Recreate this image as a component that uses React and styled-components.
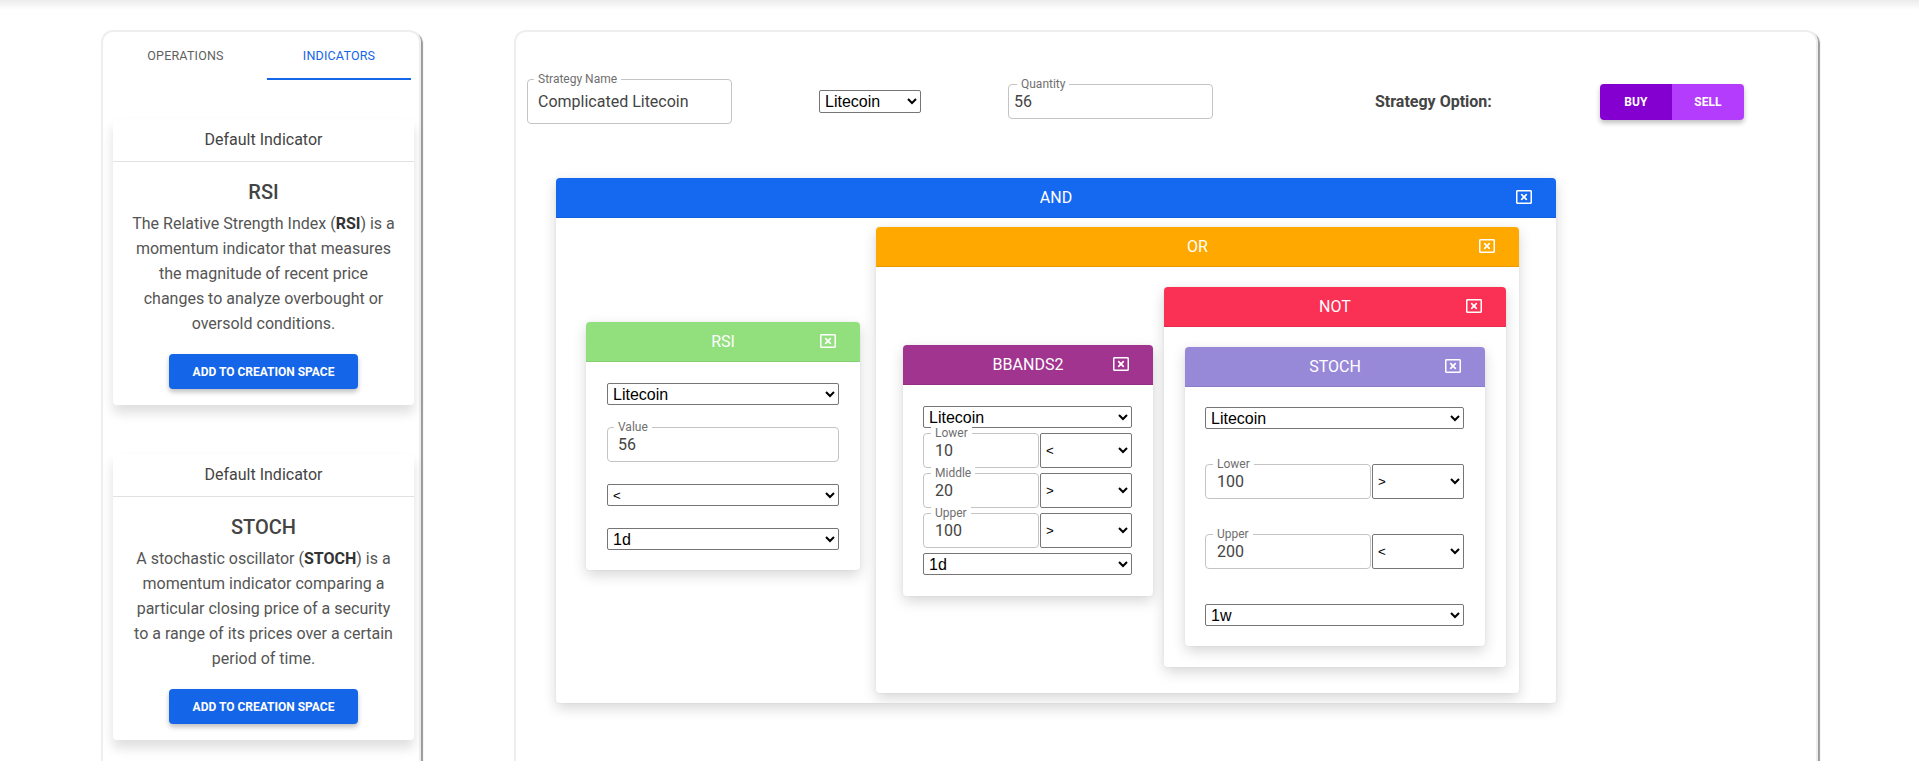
import React from 'react'
import styled, { createGlobalStyle } from 'styled-components'
import { FaRegWindowClose } from 'react-icons/fa'

const GlobalStyle = createGlobalStyle`
  body {
    margin: 0;
    background: #fff;
    font-family: Roboto, "Liberation Sans", Arial, sans-serif;
    overflow: hidden;
  }
`

const TopShade = styled.div`
  height: 10px;
  background: linear-gradient(#ececec, #fff);
`

const Page = styled.div`
  display: flex;
  align-items: flex-start;
  gap: 93px;
  padding: 20px 0 0 101px;
`

const Panel = styled.div`
  box-sizing: border-box;
  width: ${props => props.$w}px;
  height: 780px;
  border: 2px solid #eeeeee;
  border-radius: 12px;
  box-shadow: 2px 2px 1px #9a9a9a;
  background: #fff;
  flex-shrink: 0;
`

/* left side */
const Tabs = styled.div`
  display: flex;
  height: 48px;
  padding-left: 1px;
`

const Tab = styled.div`
  width: ${props => props.$w}px;
  display: flex;
  align-items: center;
  justify-content: center;
  font-size: 12.5px;
  font-weight: 400;
  letter-spacing: 0.2px;
  color: ${props => (props.$active ? '#1565e8' : '#5f5f5f')};
  border-bottom: 2px solid ${props => (props.$active ? '#1565e8' : 'transparent')};
  box-sizing: border-box;
`

const CardList = styled.div`
  display: flex;
  flex-direction: column;
  gap: 49px;
  padding: 39px 5px 0 10px;
`

const Card = styled.div`
  background: #fff;
  border-radius: 4px;
  box-shadow: 0 8px 12px rgba(0, 0, 0, 0.13);
`

const CardHead = styled.div`
  padding: 10px 0;
  line-height: 22px;
  font-size: 16px;
  color: #444;
  text-align: center;
  border-bottom: 1px solid #e2e2e2;
`

const CardBody = styled.div`
  display: flex;
  flex-direction: column;
  align-items: center;
  padding: 16px 16px 16px;
`

const CardTitle = styled.div`
  font-size: 20px;
  line-height: 28px;
  font-weight: 500;
  color: #444;
`

const CardText = styled.p`
  margin: 5px 0 0;
  font-size: 16px;
  line-height: 25px;
  color: #555;
  text-align: center;

  b {
    color: #333;
  }
`

const AddBtn = styled.button`
  margin-top: 18px;
  width: 189px;
  height: 35px;
  border: 0;
  border-radius: 4px;
  background: #1565e8;
  color: #fff;
  font-family: Roboto, sans-serif;
  font-size: 12px;
  font-weight: 700;
  box-shadow: 0 3px 5px rgba(0, 0, 0, 0.25);
`

/* right side */
const Main = styled.div`
  padding: 47px 0 0 11px;
`

const TopRow = styled.div`
  display: flex;
  align-items: center;
`

const Spaced = styled.div`
  margin-left: ${props => props.$ml || 0}px;
  display: flex;
  align-items: center;
`

const Outline = styled.div`
  position: relative;
  box-sizing: border-box;
  width: ${props => (props.$w ? props.$w + 'px' : 'auto')};
  height: ${props => props.$h || 35}px;
  border: 1px solid #c4c4c4;
  border-radius: 4px;
  display: flex;
  align-items: center;
  padding-left: ${props => props.$pl || 10}px;
  background: #fff;
`

const Legend = styled.span`
  position: absolute;
  top: -8px;
  left: ${props => props.$l || 6}px;
  padding: 0 4px;
  background: #fff;
  font-size: 12px;
  line-height: 14px;
  color: #6f6f6f;
`

const Value = styled.input`
  border: 0;
  outline: 0;
  padding: 0;
  width: 100%;
  background: transparent;
  font-family: Roboto, sans-serif;
  font-size: 16px;
  color: #444;
`

const Select = styled.select`
  box-sizing: border-box;
  width: ${props => (props.$w ? props.$w + 'px' : '100%')};
  height: ${props => props.$h || 22}px;
  font-family: "Liberation Sans", Arial, sans-serif;
  font-size: ${props => props.$fs || 16}px;
  color: #000;
  background: #fff;
  border: 1px solid #767676;
  border-radius: 2px;
  padding: 0 0 0 1px;
`

const OptionLabel = styled.div`
  font-size: 16px;
  font-weight: 700;
  color: #444;
`

const BtnGroup = styled.div`
  display: flex;
  border-radius: 4px;
  overflow: hidden;
  box-shadow: 0 3px 5px rgba(0, 0, 0, 0.25);
`

const ToggleBtn = styled.button`
  width: 72px;
  height: 36px;
  border: 0;
  background: ${props => props.$bg};
  color: #fff;
  font-family: Roboto, sans-serif;
  font-size: 12px;
  font-weight: 700;
`

const Canvas = styled.div`
  margin: 54px 0 0 29px;
`

const Block = styled.div`
  width: ${props => props.$w}px;
  margin-top: ${props => props.$mt || 0}px;
  flex-shrink: 0;
  background: #fff;
  border-radius: 4px;
  overflow: hidden;
  box-shadow: 0 5px 14px rgba(0, 0, 0, 0.16), 0 0 3px rgba(0, 0, 0, 0.05);
`

const BlockHead = styled.div`
  position: relative;
  box-sizing: border-box;
  height: 40px;
  display: flex;
  align-items: center;
  justify-content: center;
  background: ${props => props.$c};
  border-bottom: 1px solid rgba(0, 0, 0, 0.08);
  color: #fff;
  font-size: 16px;
`

const CloseIcon = styled(FaRegWindowClose)`
  position: absolute;
  right: 24px;
  top: 11px;
  width: 16px;
  height: 16px;
`

const OpBody = styled.div`
  display: flex;
  align-items: flex-start;
  gap: ${props => props.$gap}px;
  padding: ${props => props.$pad};
`

const IndBody = styled.div`
  display: flex;
  flex-direction: column;
  gap: ${props => props.$gap}px;
  padding: ${props => props.$pad};
`

const FieldRow = styled.div`
  display: grid;
  grid-template-columns: 1fr 92px;
  gap: 1px;
`

const Head = ({ color, children }) => (
  <BlockHead $c={color}>
    {children}
    <CloseIcon />
  </BlockHead>
)

const Field = ({ label, value, w, h, pl, l }) => (
  <Outline $w={w} $h={h} $pl={pl}>
    <Legend $l={l}>{label}</Legend>
    <Value readOnly value={value} />
  </Outline>
)

const Sel = ({ value, ...rest }) => (
  <Select value={value} onChange={() => {}} {...rest}>
    <option value={value}>{value}</option>
  </Select>
)

const BandRow = ({ label, value, op }) => (
  <FieldRow>
    <Field label={label} value={value} pl={11} l={7} />
    <Sel value={op} $h={35} $fs={13.33} />
  </FieldRow>
)

const App = () => {
  return (
    <>
      <GlobalStyle />
      <TopShade />
      <Page>
        <Panel $w={320}>
          <Tabs>
            <Tab $w={163}>OPERATIONS</Tab>
            <Tab $w={144} $active>INDICATORS</Tab>
          </Tabs>
          <CardList>
            <Card>
              <CardHead>Default Indicator</CardHead>
              <CardBody>
                <CardTitle>RSI</CardTitle>
                <CardText>
                  The Relative Strength Index (<b>RSI</b>) is a momentum indicator that measures the
                  magnitude of recent price changes to analyze overbought or oversold conditions.
                </CardText>
                <AddBtn>ADD TO CREATION SPACE</AddBtn>
              </CardBody>
            </Card>
            <Card>
              <CardHead>Default Indicator</CardHead>
              <CardBody>
                <CardTitle>STOCH</CardTitle>
                <CardText>
                  A stochastic oscillator (<b>STOCH</b>) is a momentum indicator comparing a
                  particular closing price of a security to a range of its prices over a certain
                  period of time.
                </CardText>
                <AddBtn>ADD TO CREATION SPACE</AddBtn>
              </CardBody>
            </Card>
          </CardList>
        </Panel>

        <Panel $w={1304}>
          <Main>
            <TopRow>
              <Field label="Strategy Name" value="Complicated Litecoin" w={205} h={45} pl={10} l={6} />
              <Spaced $ml={87}>
                <Sel value="Litecoin" $w={102} $h={23} />
              </Spaced>
              <Spaced $ml={87}>
                <Field label="Quantity" value="56" w={205} h={35} pl={5} l={8} />
              </Spaced>
              <Spaced $ml={162}>
                <OptionLabel>Strategy Option:</OptionLabel>
              </Spaced>
              <Spaced $ml={108}>
                <BtnGroup>
                  <ToggleBtn $bg="#8300d1">BUY</ToggleBtn>
                  <ToggleBtn $bg="#b43cfd">SELL</ToggleBtn>
                </BtnGroup>
              </Spaced>
            </TopRow>

            <Canvas>
              <Block $w={1000}>
                <Head color="#1568f0">AND</Head>
                <OpBody $gap={16} $pad="9px 37px 10px 30px">
                  <Block $w={274} $mt={95}>
                    <Head color="#92e07d">RSI</Head>
                    <IndBody $gap={22} $pad="21px 21px 20px">
                      <Sel value="Litecoin" />
                      <Field label="Value" value="56" pl={10} l={6} />
                      <Sel value="<" $fs={13.33} />
                      <Sel value="1d" />
                    </IndBody>
                  </Block>

                  <Block $w={643}>
                    <Head color="#fea800">OR</Head>
                    <OpBody $gap={11} $pad="0 13px 26px 27px">
                      <Block $w={250} $mt={78}>
                        <Head color="#a0348f">BBANDS2</Head>
                        <IndBody $gap={5} $pad="21px 21px 21px 20px">
                          <Sel value="Litecoin" />
                          <BandRow label="Lower" value="10" op="<" />
                          <BandRow label="Middle" value="20" op=">" />
                          <BandRow label="Upper" value="100" op=">" />
                          <Sel value="1d" />
                        </IndBody>
                      </Block>

                      <Block $w={342} $mt={20}>
                        <Head color="#fa3155">NOT</Head>
                        <OpBody $gap={0} $pad="20px 21px 21px">
                          <Block $w={300}>
                            <Head color="#9888d8">STOCH</Head>
                            <IndBody $gap={35} $pad="20px 21px 20px 20px">
                              <Sel value="Litecoin" />
                              <BandRow label="Lower" value="100" op=">" />
                              <BandRow label="Upper" value="200" op="<" />
                              <Sel value="1w" />
                            </IndBody>
                          </Block>
                        </OpBody>
                      </Block>
                    </OpBody>
                  </Block>
                </OpBody>
              </Block>
            </Canvas>
          </Main>
        </Panel>
      </Page>
    </>
  )
}

export default App
